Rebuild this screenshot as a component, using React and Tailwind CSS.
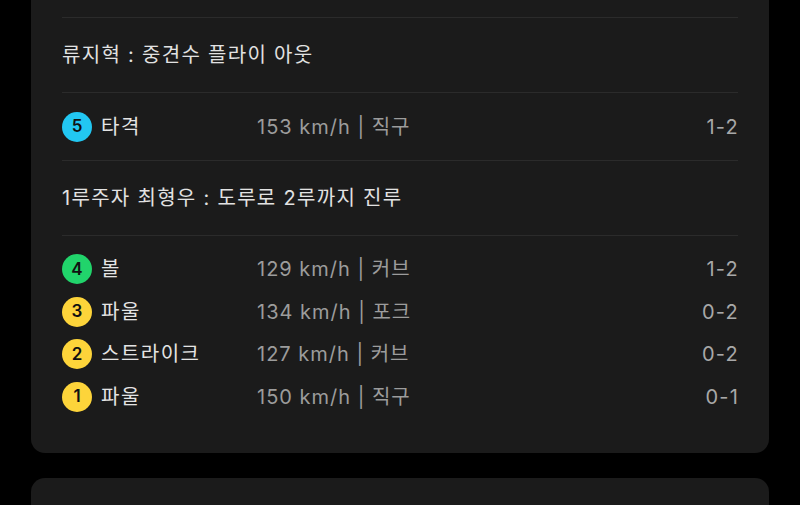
import React from "react";

const font = { fontFamily: 'Inter, "Noto Sans CJK KR", "Noto Sans", sans-serif' };

const pitches = [
  { n: 4, color: "bg-[#21d46b]", label: "볼", info: "129 km/h | 커브", count: "1-2" },
  { n: 3, color: "bg-[#fdd43a]", label: "파울", info: "134 km/h | 포크", count: "0-2" },
  { n: 2, color: "bg-[#fdd43a]", label: "스트라이크", info: "127 km/h | 커브", count: "0-2" },
  { n: 1, color: "bg-[#fdd43a]", label: "파울", info: "150 km/h | 직구", count: "0-1" },
];

function Badge({ n, color }) {
  return (
    <div className={`w-[30px] h-[30px] rounded-full ${color} flex items-center justify-center text-[#111] text-[17px] font-semibold leading-none shrink-0`}>
      {n}
    </div>
  );
}

function PitchRow({ n, color, label, info, count, h }) {
  return (
    <div className={`flex items-center ${h}`}>
      <div className="flex items-center gap-[9px] w-[195px]">
        <Badge n={n} color={color} />
        <span className="text-[20px] tracking-[1.5px] text-[#e4e4e4] leading-none">{label}</span>
      </div>
      <span className="text-[20px] tracking-[1px] text-[#9c9c9c] leading-none">{info}</span>
      <span className="ml-auto mr-[-1px] text-[20px] tracking-[1.2px] text-[#a8a8a8] leading-none">{count}</span>
    </div>
  );
}

export default function App() {
  return (
    <div className="w-[800px] h-[505px] bg-black overflow-hidden" style={font}>
      <div className="mx-[31px] bg-[#1b1b1b] rounded-b-[14px] px-[31px] pt-[17px] pb-[35px]">
        <div className="border-t border-[#2b2b2b] h-[75px] flex items-center">
          <span className="text-[20px] tracking-[1.3px] text-[#e2e2e2] leading-none">류지혁 : 중견수 플라이 아웃</span>
        </div>
        <div className="border-t border-[#2b2b2b]">
          <PitchRow n={5} color="bg-[#22c7f2]" label="타격" info="153 km/h | 직구" count="1-2" h="h-[67px]" />
        </div>
        <div className="border-t border-[#2b2b2b] h-[75px] flex items-center">
          <span className="text-[20px] tracking-[1.3px] text-[#e2e2e2] leading-none">1루주자 최형우 : 도루로 2루까지 진루</span>
        </div>
        <div className="border-t border-[#2b2b2b] pt-[12px]">
          {pitches.map((p) => (
            <PitchRow key={p.n} {...p} h="h-[42.5px]" />
          ))}
        </div>
      </div>
      <div className="mx-[31px] mt-[25px] bg-[#1b1b1b] rounded-t-[14px] h-[40px]" />
    </div>
  );
}
